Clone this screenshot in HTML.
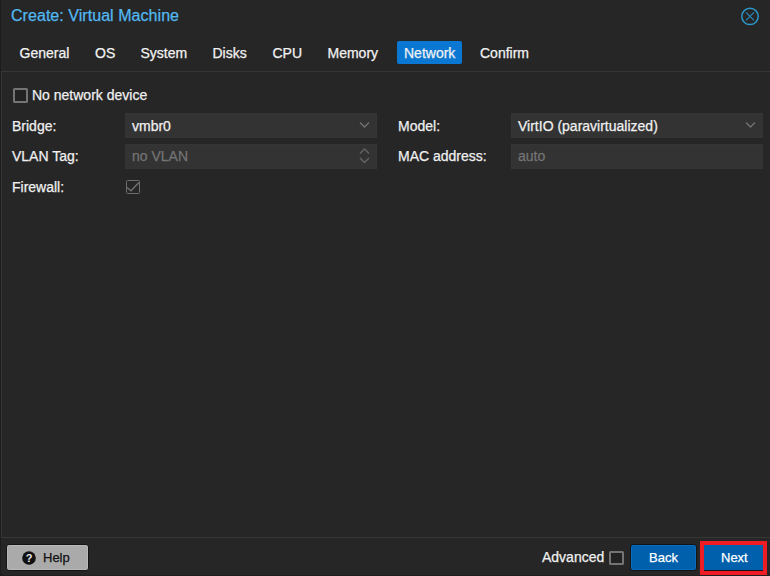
<!DOCTYPE html>
<html><head><meta charset="utf-8">
<style>
html,body{margin:0;padding:0;width:770px;height:576px;overflow:hidden;background:#262626;}
body{position:relative;font-family:"Liberation Sans",sans-serif;-webkit-text-stroke:0.25px currentColor;}
.a{position:absolute;white-space:nowrap;line-height:1;}
#edge{position:absolute;left:0;top:0;width:1px;height:576px;background:#1c1c1c;}
#bot{position:absolute;left:0;top:575px;width:770px;height:1px;background:#1f1f1f;}
#title{left:11px;top:8px;font-size:16px;color:#52b9f2;letter-spacing:0.05px;}
.tab{position:absolute;top:41px;height:23px;font-size:14px;color:#f2f2f2;line-height:25px;white-space:nowrap;}
.tab.act{background:#0a78d2;border-radius:2px;padding:0 7px;}
#panel{position:absolute;left:1px;top:71px;width:780px;height:466px;border-top:1px solid #363636;border-left:1px solid #363636;border-bottom:1px solid #363636;box-sizing:border-box;height:467px;}
.lbl{position:absolute;font-size:14px;color:#f0f0f0;line-height:1;white-space:nowrap;}
.fld{position:absolute;width:252px;height:25px;background:#333333;box-sizing:border-box;border:1px solid #353535;}
.ftxt{position:absolute;left:6px;top:5px;font-size:14px;line-height:1;white-space:nowrap;color:#f0f0f0;}
.ph{color:#747474;top:4px;}
.cb{position:absolute;box-sizing:border-box;border:2px solid #747474;border-radius:1.5px;background:#222;}
.btn{position:absolute;box-sizing:border-box;border:1px solid #141414;border-radius:3px;}
.btxt{position:absolute;font-size:13px;line-height:1;white-space:nowrap;}
</style></head>
<body>
<div id="edge"></div>
<div class="a" id="title">Create: Virtual Machine</div>
<svg style="position:absolute;left:740px;top:6px" width="21" height="21" viewBox="0 0 21 21">
  <circle cx="10" cy="10.4" r="8.2" fill="none" stroke="#2a98c8" stroke-width="1.5"/>
  <path d="M6 6.4 L14 14.4 M14 6.4 L6 14.4" stroke="#2684b6" stroke-width="1.3"/>
</svg>

<div class="tab" style="left:19.5px">General</div>
<div class="tab" style="left:95px">OS</div>
<div class="tab" style="left:140.5px">System</div>
<div class="tab" style="left:212.5px">Disks</div>
<div class="tab" style="left:272.5px">CPU</div>
<div class="tab" style="left:327.5px">Memory</div>
<div class="tab act" style="left:397px">Network</div>
<div class="tab" style="left:480px">Confirm</div>

<div id="panel"></div>

<div class="cb" style="left:13px;top:88px;width:15px;height:15px;"></div>
<div class="lbl" style="left:32px;top:88px">No network device</div>

<div class="lbl" style="left:12px;top:119px">Bridge:</div>
<div class="fld" style="left:125px;top:113px"><div class="ftxt">vmbr0</div>
  <svg style="position:absolute;left:233px;top:7px" width="11" height="8" viewBox="0 0 11 8"><path d="M1 1.5 L5.5 6 L10 1.5" fill="none" stroke="#727272" stroke-width="1.4"/></svg>
</div>
<div class="lbl" style="left:12px;top:149px">VLAN Tag:</div>
<div class="fld" style="left:125px;top:144px"><div class="ftxt ph">no VLAN</div>
  <svg style="position:absolute;left:233px;top:2px" width="11" height="18" viewBox="0 0 11 18"><path d="M1 6.5 L5.5 2 L10 6.5 M1 11 L5.5 15.5 L10 11" fill="none" stroke="#646464" stroke-width="1.4"/></svg>
</div>
<div class="lbl" style="left:12px;top:180px">Firewall:</div>
<div class="cb" style="left:126px;top:180px;width:14px;height:14px;border-width:1.5px;border-color:#6e6e6e;background:transparent;"></div>
<svg style="position:absolute;left:126px;top:180px" width="14" height="14" viewBox="0 0 14 14"><path d="M1 7.5 L5 10.8 L13 2.5" fill="none" stroke="#6e6e6e" stroke-width="1.5"/></svg>

<div class="lbl" style="left:398px;top:119px">Model:</div>
<div class="fld" style="left:511px;top:113px"><div class="ftxt">VirtIO (paravirtualized)</div>
  <svg style="position:absolute;left:233px;top:7px" width="11" height="8" viewBox="0 0 11 8"><path d="M1 1.5 L5.5 6 L10 1.5" fill="none" stroke="#727272" stroke-width="1.4"/></svg>
</div>
<div class="lbl" style="left:398px;top:149px">MAC address:</div>
<div class="fld" style="left:511px;top:144px"><div class="ftxt ph">auto</div></div>

<!-- footer -->
<div class="btn" style="left:6px;top:544px;width:83px;height:27px;background:#aaaaaa;box-shadow:inset 0 0 0 1px #b8b8b8;">
  <svg style="position:absolute;left:15px;top:6px" width="14" height="14" viewBox="0 0 14 14"><circle cx="7" cy="7" r="6.8" fill="#111"/><text x="7" y="11.2" text-anchor="middle" font-family="Liberation Sans" font-weight="bold" font-size="11" fill="#e8e8e8">?</text></svg>
  <div class="btxt" style="left:36px;top:6px;color:#111">Help</div>
</div>
<div class="lbl" style="left:542px;top:550px">Advanced</div>
<div class="cb" style="left:609px;top:551px;width:15px;height:14px;"></div>
<div class="btn" style="left:630px;top:544px;width:67px;height:27px;background:#0060ab;box-shadow:inset 0 0 0 1px #0a6cc0;">
  <div class="btxt" style="left:18px;top:6px;color:#fff">Back</div>
</div>
<div class="btn" style="left:703px;top:544px;width:61px;height:27px;background:#0060ab;border-radius:0;">
  <div class="btxt" style="left:17px;top:6px;color:#fff">Next</div>
</div>
<div style="position:absolute;left:700px;top:541px;width:67px;height:34px;box-sizing:border-box;border:4px solid #ee1d25;"></div>
<div id="bot"></div>
<svg style="position:absolute;left:0;top:571px" width="5" height="5" viewBox="0 0 5 5"><path d="M0 0 V5 H5 V4 A3.5 3.5 0 0 1 1 0 Z" fill="#1c1c1c"/></svg>
</body></html>
